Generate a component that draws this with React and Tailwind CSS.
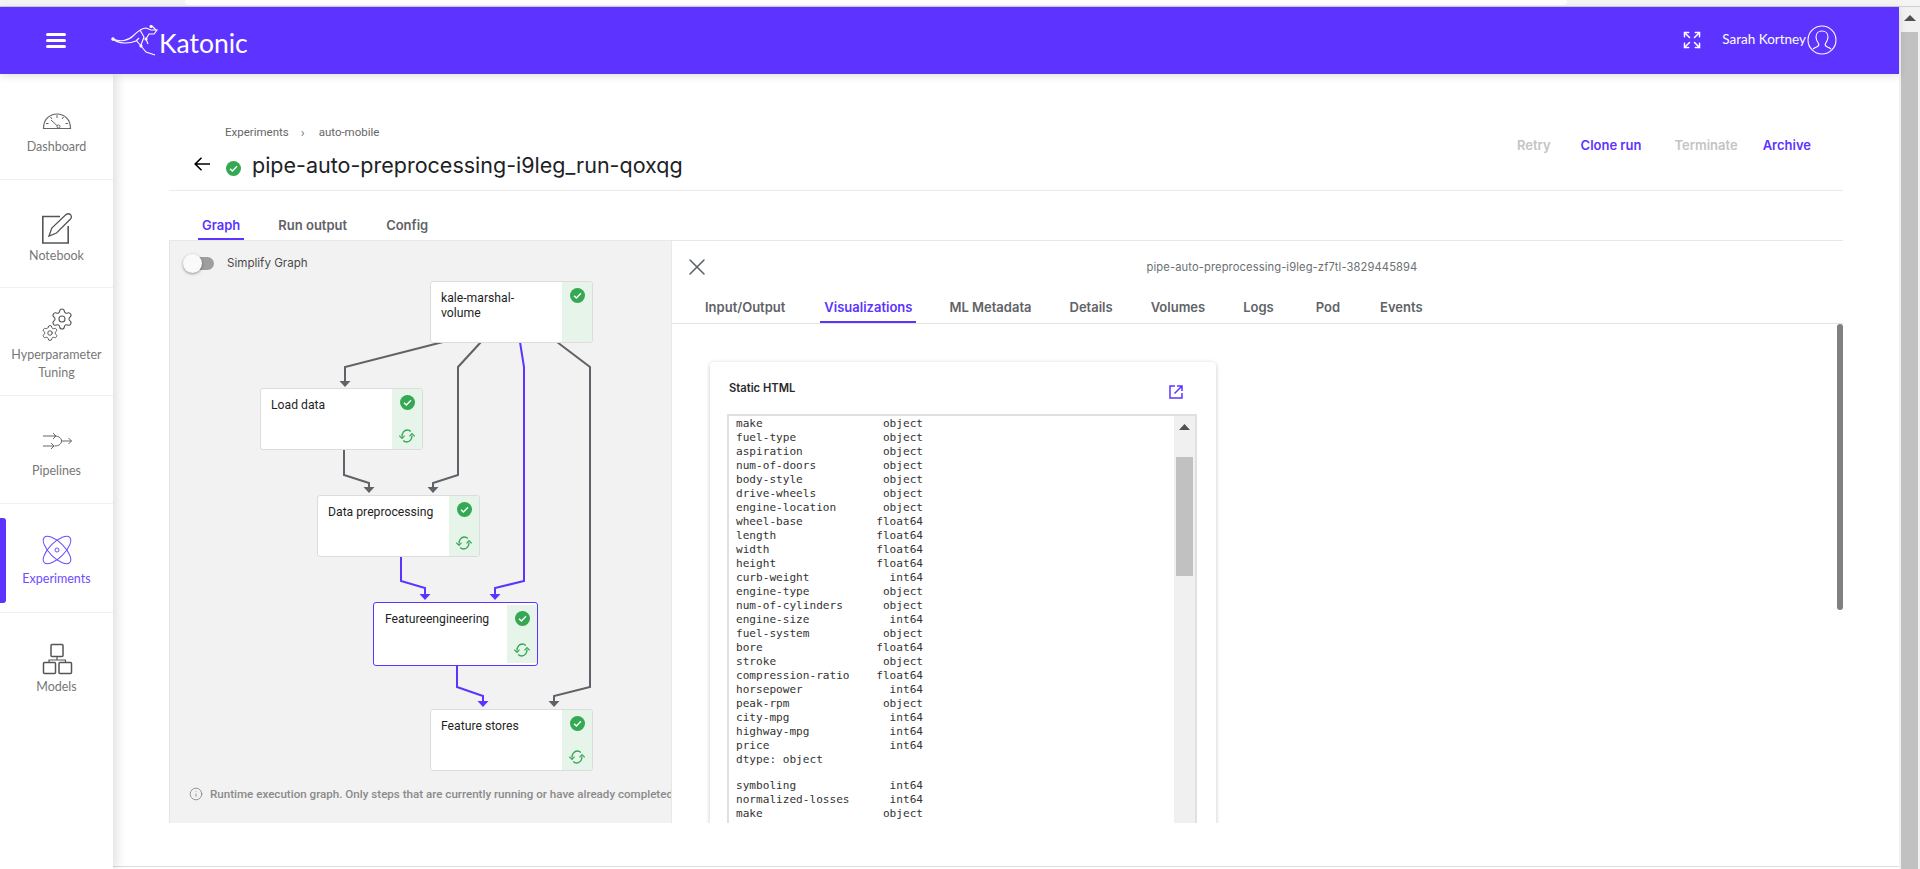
import { Expand, Info, Settings, X } from "lucide-react";

const PURPLE = "#5c33ff";
const GREY = "#5f6368";

const dtypes = [
  ["make", "object"], ["fuel-type", "object"], ["aspiration", "object"], ["num-of-doors", "object"],
  ["body-style", "object"], ["drive-wheels", "object"], ["engine-location", "object"], ["wheel-base", "float64"],
  ["length", "float64"], ["width", "float64"], ["height", "float64"], ["curb-weight", "int64"],
  ["engine-type", "object"], ["num-of-cylinders", "object"], ["engine-size", "int64"], ["fuel-system", "object"],
  ["bore", "float64"], ["stroke", "object"], ["compression-ratio", "float64"], ["horsepower", "int64"],
  ["peak-rpm", "object"], ["city-mpg", "int64"], ["highway-mpg", "int64"], ["price", "int64"],
];
const dtypes2 = [["symboling", "int64"], ["normalized-losses", "int64"], ["make", "object"], ["fuel-type", "object"]];

const fmt = (rows) => rows.map(([n, t]) => n.padEnd(28 - t.length) + t).join("\n");

function DashIcon() {
  return (
    <svg width="32" height="32" viewBox="0 0 32 32" fill="none" stroke="#666" strokeWidth="1">
      <path d="M2.5 22.5C2.5 13 9 8 16 8s13.5 5 13.5 14.5z" strokeWidth="1.2" />
      <path d="M16 9v3M9.500 11l1.500 2M22.500 11l-1.500 2M5 17.500h2.500M27 17.500h-2.500M10 14l6.500 6" />
      <circle cx="17.500" cy="20.500" r="1.500" />
    </svg>
  );
}

function NoteIcon() {
  return (
    <svg width="32" height="32" viewBox="0 0 32 32" fill="none" stroke="#555" strokeWidth="1.6">
      <path d="M19 4.500H1.800V31H27.200V14" />
      <path d="M8 24l2.800-8L25 2.600Q27.500.8 29.600 2.800 31.200 5 29.500 7L15.500 21z" strokeWidth="1.3" />
    </svg>
  );
}

function GearsIcon() {
  return (
    <svg className="overflow-visible" width="32" height="32" viewBox="0 0 32 32" fill="none">
      <Settings x="9" y="-2" width="24" height="24" stroke="#555" strokeWidth="1.100" className="overflow-visible" />
      <Settings x="0" y="15" width="18" height="18" stroke="#555" strokeWidth="1.300" className="overflow-visible" />
    </svg>
  );
}

function PipeIcon() {
  return (
    <svg width="32" height="32" viewBox="0 0 32 32" fill="none" stroke="#666" strokeWidth="1">
      <path d="M2 11h13M2 21h11M12 8l3 3-3 3M10 18l3 3-3 3" />
      <path d="M13.500 11c5 0 7 2.500 7 5s-2 5-7 5" />
      <path d="M20.500 16h10M27.500 13l3 3-3 3" />
    </svg>
  );
}

function AtomIcon() {
  return (
    <svg width="32" height="32" viewBox="0 0 32 32" fill="none" stroke="#6d4cff" strokeWidth="1">
      <ellipse cx="16" cy="16" rx="18" ry="7.500" transform="rotate(45 16 16)" />
      <ellipse cx="16" cy="16" rx="18" ry="7.500" transform="rotate(-45 16 16)" />
      <circle cx="16" cy="16" r="2" />
    </svg>
  );
}

function ModelsIcon() {
  return (
    <svg width="32" height="32" viewBox="0 0 32 32" fill="none" stroke="#555" strokeWidth="1.500">
      <rect x="10" y="1.500" width="12" height="12" rx="1" />
      <rect x="2.500" y="19.500" width="12" height="11" rx="1" />
      <rect x="18" y="19.500" width="12.500" height="11" rx="1" />
      <path d="M16 13.500V17M8 19.500V17H24.500V19.500" strokeWidth="1.200" />
    </svg>
  );
}

const navItems = [
  { label: "Dashboard", icon: <DashIcon />, cls: "h-[106px] pt-[32px]", lab: "mt-0" },
  { label: "Notebook", icon: <NoteIcon />, cls: "h-[108px] pt-[32px]", lab: "mt-[3px]" },
  { label: "Hyperparameter Tuning", icon: <GearsIcon />, cls: "h-[108px] pt-[21px]", lab: "mt-[5px]" },
  { label: "Pipelines", icon: <PipeIcon />, cls: "h-[108px] pt-[29px]", lab: "mt-[5px]" },
  { label: "Experiments", icon: <AtomIcon />, cls: "h-[109px] pt-[30px]", lab: "mt-[4px]", active: true },
  { label: "Models", icon: <ModelsIcon />, cls: "h-[108px] pt-[30px]", lab: "mt-[3px]", last: true },
];

function CheckDot({ size = 15 }) {
  return (
    <svg width={size} height={size} viewBox="0 0 16 16">
      <circle cx="8" cy="8" r="8" fill="#34a853" />
      <path d="M4.300 8.200l2.500 2.500 4.900-5" fill="none" stroke="#fff" strokeWidth="1.500" />
    </svg>
  );
}

function SyncIcon() {
  return (
    <svg width="16" height="14" viewBox="0 0 16 14" fill="none" stroke="#34a853" strokeWidth="1.400">
      <path d="M3 7.500C2.800 3.800 5.400 1 8.300 1c1.500 0 2.600.5 3.500 1.400" />
      <path d="M13 6.500c.2 3.700-2.400 6.500-5.300 6.500-1.500 0-2.600-.5-3.500-1.400" />
      <path d="M.3 6.600L3 9.300l2.500-2.700M15.700 7.400L13 4.700l-2.500 2.700" strokeWidth="1.200" />
    </svg>
  );
}

function GraphNode({ pos, selected, sync = true, children }) {
  return (
    <div className={`absolute flex overflow-hidden rounded-[3px] bg-white ${pos} ${selected ? "h-[64px] w-[165px] border-[1.5px] border-[#5c33ff] p-0" : "h-[62px] w-[163px] border border-[#dcdcdc]"}`}>
      <div className={`flex-1 pt-[9px] font-['Roboto',sans-serif] text-[12.2px] leading-[15px] text-[#1f1f1f] ${selected ? "pl-[11px]" : "pl-[10px]"}`}>{children}</div>
      <div className={`flex w-[30px] flex-col items-center justify-between bg-[#e6f4ea] pt-[6px] pb-[6px] ${selected ? "my-[2px]" : ""}`}>
        <CheckDot />
        {sync && <SyncIcon />}
      </div>
    </div>
  );
}

function Edge({ d, tip, purple }) {
  const c = purple ? PURPLE : GREY;
  return (
    <g>
      <path d={d} fill="none" stroke={c} strokeWidth="2" />
      <polygon points={`${tip[0] - 5.500},${tip[1] - 6} ${tip[0] + 5.500},${tip[1] - 6} ${tip[0]},${tip[1]}`} fill={c} />
    </g>
  );
}

function Kangaroo() {
  return (
    <svg width="50" height="32" viewBox="0 0 50 32" fill="none" stroke="#fff" strokeWidth="1.100">
      <path d="M3 14C10 17 18 16 23 11 27 7 31 3 36 3L41 5 47 5 44 9 39 9 36 14 38 19" />
      <path d="M3 14C9 19 19 19 26 16L29 13" />
      <path d="M26 15L31 21 36 27 45 30M30 5L34 12 31 20" />
      <path d="M42 1L46 5" />
      <circle cx="3" cy="14" r="1.200" fill="#fff" />
      <circle cx="36" cy="14" r="1" fill="#fff" />
      <circle cx="31" cy="21" r="1" fill="#fff" />
      <circle cx="41" cy="1.500" r="1" fill="#fff" />
    </svg>
  );
}

function Avatar() {
  return (
    <svg width="30" height="30" viewBox="0 0 30 30" fill="none" stroke="#fff" strokeWidth="1.100">
      <circle cx="15" cy="15" r="14" />
      <path d="M15 6c-3.500 0-6 2.500-6 6 0 3 1.500 5 2.500 6.500.5 1 0 2.500-1 3-1 .5-3 1-4.500 2.500M15 6c3.500 0 6 2.500 6 6 0 3-1.500 5-2.500 6.500-.5 1 0 2.500 1 3 1 .5 3 1 4.500 2.500" />
    </svg>
  );
}

function Sidebar() {
  return (
    <aside className="relative z-10 w-[113px] shrink-0 bg-white shadow-[4px_0_10px_rgba(0,0,0,0.12)]">
      {navItems.map((it) => (
        <div
          key={it.label}
          className={`relative flex flex-col items-center ${it.cls} ${it.last ? "" : "border-b border-[#efefef]"}`}
        >
          {it.active && <div className="absolute left-0 top-[14px] h-[85px] w-[6px] rounded-r-[3px] bg-[#5c33ff]" />}
          {it.icon}
          <div className={`${it.lab} w-[100px] text-center font-['Lato',sans-serif] text-[12.5px] leading-[18px] ${it.active ? "text-[#6d4cff]" : "text-[#777]"}`}>
            {it.label}
          </div>
        </div>
      ))}
    </aside>
  );
}

function Tab({ label, active, cls }) {
  return (
    <div className={`flex h-full items-end justify-center border-b-2 font-['Inter',sans-serif] text-[13px] font-semibold leading-[16px] ${cls} ${active ? "border-[#5c33ff] text-[#5c33ff]" : "border-transparent text-[#5f6368]"}`}>
      {label}
    </div>
  );
}

export default function App() {
  return (
    <div className="flex h-[869px] w-[1920px] flex-col overflow-hidden bg-white">
      <div className="flex h-[7px] shrink-0 border-b border-[#cfcfcf] bg-[#f4f4f4]">
        <div className="ml-[185px] h-[5px] w-[1382px] rounded-b-[4px] bg-white" />
      </div>
      <div className="flex min-h-0 flex-1">
        <div className="flex w-[1899px] shrink-0 flex-col">
          <header className="relative z-20 flex h-[67px] shrink-0 items-center bg-[#5c33ff] pl-[46px] pr-[62px] shadow-[0_2px_8px_rgba(0,0,0,0.12)]">
            <div className="flex w-[20px] flex-col gap-[3px]">
              <div className="h-[3px] rounded-full bg-white" />
              <div className="h-[3px] rounded-full bg-white" />
              <div className="h-[3px] rounded-full bg-white" />
            </div>
            <div className="ml-[44px] flex items-center">
              <Kangaroo />
              <span className="-ml-[1px] mt-[5px] font-['Lato',sans-serif] text-[26.5px] font-normal leading-[30px] text-white">Katonic</span>
            </div>
            <div className="-mt-[2px] ml-auto flex items-center">
              <Expand size={20} color="#fff" strokeWidth={1.800} />
              <span className="ml-[20px] font-['Lato',sans-serif] text-[13.5px] text-white">Sarah Kortney</span>
              <div className="ml-[1px]"><Avatar /></div>
            </div>
          </header>

          <div className="flex min-h-0 flex-1">
            <Sidebar />
            <main className="flex min-w-0 flex-1 flex-col px-[56px]">
              <div className="flex h-[117px] shrink-0 justify-between border-b border-[#ebebeb]">
                <div>
                  <div className="ml-[56px] mt-[52px] flex h-[14px] items-center font-['Roboto',sans-serif] text-[11.5px] text-[#666]">
                    <span>Experiments</span>
                    <span className="ml-[12px] mr-[14px] text-[13px] text-[#777]">›</span>
                    <span>auto-mobile</span>
                  </div>
                  <div className="mt-[11px] flex items-center">
                    <svg className="-mt-[2px] ml-[25px]" width="16" height="14" viewBox="0 0 16 14" fill="none" stroke="#000" strokeWidth="1.600">
                      <path d="M16 7H1M7.500.800L1.200 7l6.300 6.200" />
                    </svg>
                    <div className="ml-[16px] mt-[6px]"><CheckDot /></div>
                    <h1 className="ml-[11px] font-['Inter',sans-serif] text-[21.5px] font-normal leading-[28px] text-[#202124]">
                      pipe-auto-preprocessing-i9leg_run-qoxqg
                    </h1>
                  </div>
                </div>
                <div className="mt-[63px] flex h-[18px] items-center pr-[32px] font-['Inter',sans-serif] text-[13px] font-semibold">
                  <span className="text-[#c4c4c4]">Retry</span>
                  <span className="ml-[30px] text-[#5c33ff]">Clone run</span>
                  <span className="ml-[33px] text-[#c4c4c4]">Terminate</span>
                  <span className="ml-[25px] text-[#5c33ff]">Archive</span>
                </div>
              </div>

              <div className="flex h-[50px] shrink-0 border-b border-[#e8e8e8] pl-[29px]">
                <Tab label="Graph" active cls="px-[4px] pb-[5px]" />
                <Tab label="Run output" cls="ml-[34px] pb-[5px]" />
                <Tab label="Config" cls="ml-[39px] pb-[5px]" />
              </div>

              <div className="flex h-[582px] shrink-0 overflow-hidden">
                <section className="w-[502px] shrink-0 overflow-hidden border-l border-[#e4e4e4] bg-[#f2f2f2]">
                  <div className="flex h-[40px] items-start pl-[14px] pt-[16px]">
                    <div className="relative h-[13px] w-[30px] rounded-full bg-[#9e9e9e]">
                      <div className="absolute -left-[1px] -top-[3px] h-[19px] w-[19px] rounded-full bg-[#fafafa] shadow-[0_1px_3px_rgba(0,0,0,0.4)]" />
                    </div>
                    <span className="-mt-[3px] ml-[13px] font-['Inter',sans-serif] text-[11.6px] leading-[19px] text-[#4a4a4a]">Simplify Graph</span>
                  </div>

                  <div className="relative h-[494px]">
                    <svg className="absolute -left-px top-0" width="502" height="494" viewBox="169 281 502 494">
                      <Edge d="M443 342L345 367V382" tip={[345, 387]} />
                      <Edge d="M481 342L458 367V475L433 483V488" tip={[433, 493]} />
                      <Edge d="M557 342L590 367V687L554 696V702" tip={[554, 707]} />
                      <Edge d="M344 450V475L369 483V488" tip={[369, 493]} />
                      <Edge d="M520 342L524 367V581L495 588V595" tip={[495, 600]} purple />
                      <Edge d="M401 557V581L425 588V595" tip={[425, 600]} purple />
                      <Edge d="M457 666V687L483 696V702" tip={[483, 707]} purple />
                    </svg>
                    <GraphNode pos="left-[260px] top-0" sync={false}>kale-marshal-<br />volume</GraphNode>
                    <GraphNode pos="left-[90px] top-[107px]">Load data</GraphNode>
                    <GraphNode pos="left-[147px] top-[214px]">Data preprocessing</GraphNode>
                    <GraphNode pos="left-[203px] top-[321px]" selected>Featureengineering</GraphNode>
                    <GraphNode pos="left-[260px] top-[428px]">Feature stores</GraphNode>
                  </div>

                  <div className="flex items-center whitespace-nowrap pl-[19px] pt-[11px] font-['Roboto',sans-serif] text-[11.6px] font-medium leading-[16px] text-[#8a8a8a]">
                    <Info size={14} strokeWidth={1.500} className="shrink-0" />
                    <span className="ml-[7px]">Runtime execution graph. Only steps that are currently running or have already completed are shown.</span>
                  </div>
                </section>

                <section className="relative min-w-0 flex-1 border-l border-[#e8e8e8]">
                  <div className="flex h-[52px] items-center">
                    <X size={28} color="#5f6368" strokeWidth={1.300} className="-mt-[1px] ml-[11px] shrink-0" />
                    <div className="mt-[1px] flex-1 pl-[10px] text-center font-['Inter',sans-serif] text-[11.2px] tracking-[0.1px] text-[#6b6f73]">
                      pipe-auto-preprocessing-i9leg-zf7tl-3829445894
                    </div>
                  </div>
                  <div className="flex h-[31px] border-b border-[#e4e4e4] pl-[14px]">
                    <Tab label="Input/Output" cls="px-[19px] pb-[6px]" />
                    <Tab label="Visualizations" active cls="ml-[16px] mr-[14px] px-[4px] pb-[6px]" />
                    <Tab label="ML Metadata" cls="px-[19px] pb-[6px]" />
                    <Tab label="Details" cls="px-[19px] pb-[6px]" />
                    <Tab label="Volumes" cls="px-[19px] pb-[6px]" />
                    <Tab label="Logs" cls="px-[19px] pb-[6px]" />
                    <Tab label="Pod" cls="px-[23px] pb-[6px]" />
                    <Tab label="Events" cls="px-[17px] pb-[6px]" />
                  </div>

                  <div className="absolute right-0 top-[83px] h-[286px] w-[6px] rounded-[3px] bg-[#808080]" />

                  <div className="ml-[38px] mt-[38px] h-[600px] w-[506px] rounded-[4px] bg-white shadow-[0_1px_4px_rgba(0,0,0,0.22)]">
                    <div className="flex h-[52px] items-start justify-between pl-[19px] pr-[33px] pt-[18px]">
                      <span className="font-['Inter',sans-serif] text-[11.2px] font-semibold leading-[16px] text-[#2a2a2a]">Static HTML</span>
                      <svg className="mt-[5px]" width="14" height="14" viewBox="0 0 14 14" fill="none" stroke="#5c33ff" strokeWidth="1.500">
                        <path d="M6 1H1V13H13V8M8 1H13V6M13 1L5.500 8.500" />
                      </svg>
                    </div>
                    <div className="ml-[17px] flex h-[500px] w-[470px] border-2 border-[#e0e0e0]">
                      <div className="min-w-0 flex-1 pl-[7px] pt-[1px] font-['DejaVu_Sans_Mono',monospace] text-[11.1px] leading-[14px] text-[#333]">
                        <pre className="font-[inherit]">{fmt(dtypes)}{"\n"}dtype: object</pre>
                        <pre className="mt-[12px] font-[inherit]">{fmt(dtypes2)}</pre>
                      </div>
                      <div className="w-[21px] shrink-0 bg-[#f0f0f0] pl-[2px]">
                        <svg className="ml-[3px] mt-[8px]" width="11" height="6" viewBox="0 0 11 6"><polygon points="5.500,0 11,6 0,6" fill="#505050" /></svg>
                        <div className="mt-[27px] h-[119px] w-[17px] bg-[#c1c1c1]" />
                      </div>
                    </div>
                  </div>
                </section>
              </div>
              <div className="-mx-[56px] mt-[43px] h-px shrink-0 bg-[#dcdcdc]" />
            </main>
          </div>
        </div>

        <div className="w-[21px] shrink-0 bg-[#f1f1f1] pl-[2px]">
          <svg className="ml-[3px] mt-[8px]" width="12" height="6" viewBox="0 0 12 6"><polygon points="6,0 12,6 0,6" fill="#505050" /></svg>
          <div className="mt-[11px] h-[860px] w-[17px] bg-[#c1c1c1]" />
        </div>
      </div>
    </div>
  );
}
